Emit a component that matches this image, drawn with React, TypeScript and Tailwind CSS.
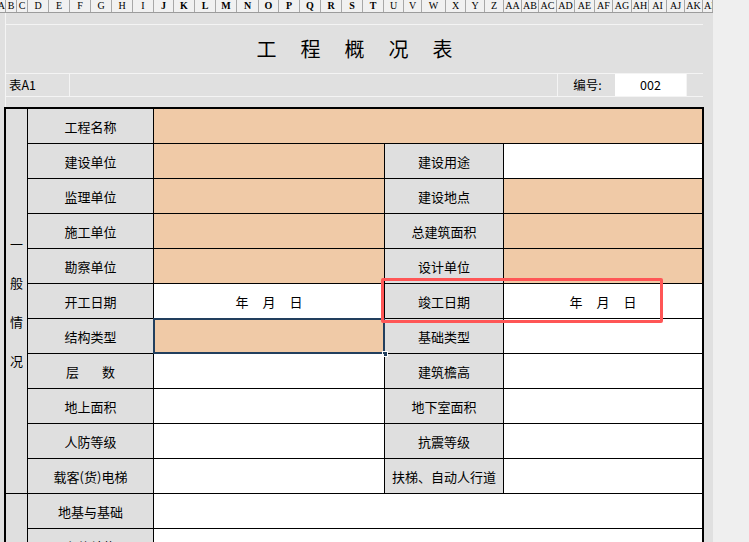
import React from "react";

const EDGES = [0, 6, 17, 28, 49, 70, 91, 112, 133, 154, 174, 195, 216, 237, 259, 279, 300, 321, 342, 363, 384, 404, 422, 446, 466, 485, 504, 522, 539, 557, 575, 595, 613, 632, 649, 667, 685, 703, 713];

const LETTERS = "ABCDEFGHIJKLMNOPQRSTUVWXYZ".split("");
const HEADERS = [...LETTERS, ...LETTERS.slice(0, 11).map((l) => "A" + l), "AL"];

type Fill = "peach" | "white";

type Row = {
  label: React.ReactNode;
  full?: Fill;
  v1?: Fill;
  label2?: string;
  v2?: Fill;
  date?: boolean;
  selected?: boolean;
};

const ROWS: Row[] = [
  { label: "工程名称", full: "peach" },
  { label: "建设单位", v1: "peach", label2: "建设用途", v2: "white" },
  { label: "监理单位", v1: "peach", label2: "建设地点", v2: "peach" },
  { label: "施工单位", v1: "peach", label2: "总建筑面积", v2: "peach" },
  { label: "勘察单位", v1: "peach", label2: "设计单位", v2: "peach" },
  { label: "开工日期", v1: "white", label2: "竣工日期", v2: "white", date: true },
  { label: "结构类型", v1: "peach", label2: "基础类型", v2: "white", selected: true },
  {
    label: (
      <span className="flex gap-[23px]">
        <span>层</span>
        <span>数</span>
      </span>
    ),
    v1: "white",
    label2: "建筑檐高",
    v2: "white",
  },
  { label: "地上面积", v1: "white", label2: "地下室面积", v2: "white" },
  { label: "人防等级", v1: "white", label2: "抗震等级", v2: "white" },
  { label: "载客(货)电梯", v1: "white", label2: "扶梯、自动人行道", v2: "white" },
];

function fillClass(f?: Fill) {
  return f === "peach" ? "bg-[#f0caa7]" : "bg-white";
}

function DateText() {
  return (
    <span className="flex gap-[14px]">
      <span>年</span>
      <span>月</span>
      <span>日</span>
    </span>
  );
}

function Label({ children, row, col }: { children: React.ReactNode; row: number; col: string }) {
  return (
    <div
      className={`flex items-center justify-center bg-[#dfdfdf] ${col}`}
      style={{ gridRow: row }}
    >
      {children}
    </div>
  );
}

export default function App() {
  return (
    <div className="relative h-[542px] w-[749px] overflow-hidden bg-[#efefef] font-['Noto_Sans_CJK_SC',sans-serif] text-[13px] leading-none text-black">
      {/* column letters */}
      <div className="flex h-[13px] w-[713px] border-b border-[#9c9c9c] bg-[#f1f1f1] font-['Liberation_Serif',serif] text-[10px] leading-[12px]">
        {HEADERS.map((h, i) => {
          const w = EDGES[i + 1] - EDGES[i];
          const bold = i >= 9 && i <= 19;
          const align = i === 0 ? "justify-end" : i === HEADERS.length - 1 ? "justify-start pl-px" : "justify-center";
          return (
            <div
              key={h}
              className={`flex shrink-0 overflow-hidden border-r border-[#a8a8a8] ${align} ${bold ? "font-bold" : ""}`}
              style={{ width: w }}
            >
              <span className="whitespace-nowrap">{h}</span>
            </div>
          );
        })}
      </div>

      {/* sheet */}
      <div className="w-[713px] bg-[#e0e0e0] pb-[40px]">
        <div className="ml-[5px] w-[698px] border-l border-[#f4f4f4]">
          <div className="h-[12px] border-b border-[#f4f4f4]" />
          <div className="flex h-[49px] items-center justify-center border-b border-[#f4f4f4] text-[20px]">
            <span className="flex gap-[24px]">
              <span>工</span>
              <span>程</span>
              <span>概</span>
              <span>况</span>
              <span>表</span>
            </span>
          </div>
          <div className="flex h-[23px] border-b border-[#f4f4f4] text-[12.5px]">
            <div className="flex w-[64px] items-center border-r border-[#f4f4f4] pl-[3px]">表A1</div>
            <div className="w-[488px] border-r border-[#f4f4f4]" />
            <div className="flex w-[57px] items-center justify-center pl-[2px]">编号:</div>
            <div className="flex w-[71px] items-center justify-center bg-white">002</div>
            <div className="flex-1 border-l border-[#f4f4f4]" />
          </div>
          <div className="h-[10px]" />
        </div>

        <div className="ml-[4px] grid w-[700px] auto-rows-[34px] grid-cols-[21px_125px_230px_118px_198px] gap-px border-x-2 border-t-2 border-black bg-black">
          <div className="flex flex-col items-center justify-center gap-[26px] bg-[#dfdfdf] pt-px" style={{ gridRow: "1 / span 11", gridColumn: 1 }}>
            <span>一</span>
            <span>般</span>
            <span>情</span>
            <span>况</span>
          </div>

          {ROWS.map((r, i) => {
            const row = i + 1;
            return (
              <React.Fragment key={i}>
                <Label row={row} col="col-start-2">{r.label}</Label>
                {r.full ? (
                  <div className={`col-span-3 col-start-3 ${fillClass(r.full)}`} style={{ gridRow: row }} />
                ) : (
                  <>
                    <div
                      className={`relative col-start-3 flex items-center justify-center ${fillClass(r.v1)}`}
                      style={{ gridRow: row }}
                    >
                      {r.date ? <DateText /> : null}
                      {r.selected ? (
                        <>
                          <div className="absolute -inset-px border-2 border-[#223f5e]" />
                          <div className="absolute -bottom-[4px] -right-[4px] h-[6px] w-[6px] border border-white bg-[#223f5e]" />
                        </>
                      ) : null}
                    </div>
                    <Label row={row} col="col-start-4">{r.label2}</Label>
                    <div
                      className={`col-start-5 flex items-center justify-center ${fillClass(r.v2)}`}
                      style={{ gridRow: row }}
                    >
                      {r.date ? <DateText /> : null}
                    </div>
                  </>
                )}
              </React.Fragment>
            );
          })}

          <div className="bg-[#dfdfdf]" style={{ gridRow: "12 / span 2", gridColumn: 1 }} />
          <Label row={12} col="col-start-2">地基与基础</Label>
          <div className="col-span-3 col-start-3 bg-white" style={{ gridRow: 12 }} />
          <Label row={13} col="col-start-2">主体结构</Label>
          <div className="col-span-3 col-start-3 bg-white" style={{ gridRow: 13 }} />
        </div>
      </div>

      {/* annotation box */}
      <div className="absolute left-[381px] top-[278px] h-[45px] w-[282px] rounded-[2px] border-[3px] border-[#ff5656]" />
    </div>
  );
}
